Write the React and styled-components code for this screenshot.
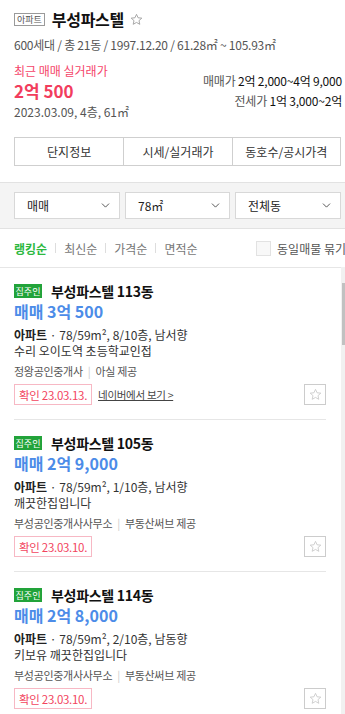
import styled, { createGlobalStyle } from 'styled-components';
import { ChevronDown } from 'lucide-react';

const GlobalStyle = createGlobalStyle`
  html, body {
    margin: 0;
    padding: 0;
    background: #fff;
  }
  body {
    font-family: 'Noto Sans CJK KR', 'Noto Sans', 'Liberation Sans', sans-serif;
    color: #222;
    -webkit-font-smoothing: antialiased;
  }
  * {
    box-sizing: border-box;
  }
`;

const Page = styled.div`
  width: 345px;
  height: 714px;
  display: flex;
  flex-direction: column;
  overflow: hidden;
  background: #fff;
`;

const Header = styled.header`
  padding: 11px 3px 0 14px;
`;

const TitleRow = styled.div`
  display: flex;
  align-items: center;
  height: 17px;
`;

const TypeTag = styled.span`
  display: inline-flex;
  align-items: center;
  justify-content: center;
  height: 13px;
  padding: 0 2px;
  border: 1px solid #9a9a9a;
  font-size: 9px;
  line-height: 1;
  color: #555;
  margin-right: 7px;
`;

const Title = styled.h1`
  margin: 0;
  font-size: 16px;
  line-height: 17px;
  font-weight: 700;
  letter-spacing: -0.3px;
  color: #111;
  margin-right: 6px;
`;

const Summary = styled.p`
  margin: 9px 0 0;
  font-size: 12px;
  line-height: 16px;
  color: #555;
  letter-spacing: -0.25px;
`;

const PriceRow = styled.div`
  display: flex;
  justify-content: space-between;
  margin-top: 10px;
`;

const RecentLabel = styled.div`
  font-size: 12px;
  line-height: 16px;
  color: #f5456a;
`;

const RecentPrice = styled.div`
  font-size: 17px;
  line-height: 24px;
  font-weight: 700;
  color: #f23d5d;
`;

const RecentMeta = styled.div`
  margin-top: 1px;
  font-size: 12px;
  line-height: 16px;
  color: #555;
`;

const RangeCol = styled.div`
  display: flex;
  flex-direction: column;
  align-items: flex-end;
  gap: 4px;
  padding-top: 10px;
`;

const RangeLine = styled.div`
  font-size: 12px;
  line-height: 16px;
  color: #555;
  letter-spacing: -0.2px;
  b {
    font-weight: 400;
    color: #111;
  }
`;

const Tabs = styled.nav`
  display: grid;
  grid-template-columns: repeat(3, 1fr);
  margin: 17px 4px 0 14px;
  border: 1px solid #cfcfcf;
  height: 29px;
`;

const Tab = styled.div`
  display: flex;
  align-items: center;
  justify-content: center;
  font-size: 12px;
  color: #333;
  border-left: ${p => (p.first ? 'none' : '1px solid #cfcfcf')};
`;

const FilterBar = styled.div`
  display: grid;
  grid-template-columns: 106px 105px 106px;
  gap: 5px;
  margin-top: 16px;
  padding: 9px 4px 9px 14px;
  background: #f4f4f4;
  border-top: 1px solid #e2e2e2;
  border-bottom: 1px solid #e2e2e2;
`;

const Select = styled.div`
  display: flex;
  align-items: center;
  justify-content: space-between;
  height: 27px;
  padding: 0 7px 0 12px;
  background: #fff;
  border: 1px solid #d8d8d8;
  font-size: 12px;
  color: #222;
`;

const SortBar = styled.div`
  display: flex;
  align-items: center;
  height: 38px;
  padding: 0 0 0 14px;
  white-space: nowrap;
`;

const SortItem = styled.span`
  font-size: 12px;
  color: ${p => (p.active ? '#2db83f' : '#777')};
  font-weight: ${p => (p.active ? 700 : 400)};
`;

const SortDivider = styled.span`
  width: 1px;
  height: 10px;
  background: #ddd;
  margin: 0 8px;
`;

const Bundle = styled.label`
  display: flex;
  align-items: center;
  margin-left: auto;
  margin-right: -1px;
  font-size: 12px;
  color: #555;
`;

const Check = styled.span`
  width: 15px;
  height: 15px;
  border: 1px solid #e2e2e2;
  background: #f8f8f8;
  margin-right: 6px;
`;

const ListArea = styled.div`
  flex: 1;
  display: flex;
  min-height: 0;
`;

const List = styled.ul`
  flex: 1;
  margin: 0;
  padding: 0 15px 0 14px;
  list-style: none;
  overflow: hidden;
  border-top: 1px solid #e6e6e6;
`;

const ScrollTrack = styled.div`
  width: 4px;
  padding-top: 16px;
  background: #f1f1f1;
`;

const ScrollThumb = styled.div`
  width: 3px;
  margin-left: 1px;
  height: 62px;
  background: #c1c1c1;
`;

const Item = styled.li`
  padding: 16px 0 14px;
  border-top: ${p => (p.first ? 'none' : '1px solid #e6e6e6')};
`;

const ItemHead = styled.div`
  display: flex;
  align-items: center;
  height: 14px;
`;

const OwnerTag = styled.span`
  display: inline-flex;
  align-items: center;
  justify-content: center;
  width: 28px;
  height: 14px;
  background: #22a33a;
  color: #fff;
  font-size: 9px;
  margin-right: 9px;
`;

const ItemTitle = styled.span`
  font-size: 14px;
  line-height: 14px;
  font-weight: 700;
  letter-spacing: -0.3px;
  color: #111;
`;

const ItemPrice = styled.div`
  margin-top: 3px;
  font-size: 16px;
  line-height: 20px;
  font-weight: 700;
  color: #4c8ce8;
`;

const Spec = styled.div`
  margin-top: 6px;
  font-size: 12px;
  line-height: 16px;
  color: #333;
  b {
    font-weight: 700;
    color: #222;
  }
`;

const Desc = styled.div`
  font-size: 12px;
  line-height: 16px;
  color: #333;
`;

const Agency = styled.div`
  margin-top: 5px;
  font-size: 11px;
  line-height: 14px;
  color: #555;
  letter-spacing: -0.3px;
  i {
    font-style: normal;
    color: #ccc;
    margin: 0 5px;
  }
`;

const Actions = styled.div`
  display: flex;
  align-items: center;
  height: 21px;
  margin-top: 6px;
`;

const Confirm = styled.span`
  display: inline-flex;
  align-items: center;
  height: 21px;
  padding: 0 4px;
  border: 1px solid #f7b8c4;
  color: #f2445e;
  font-size: 11.5px;
  letter-spacing: -0.3px;
`;

const NaverLink = styled.a`
  margin-left: 6px;
  font-size: 10.5px;
  color: #444;
  text-decoration: underline;
  letter-spacing: -0.3px;
`;

const SaveButton = styled.button`
  margin-left: auto;
  width: 22px;
  height: 21px;
  padding: 0;
  display: flex;
  align-items: center;
  justify-content: center;
  background: #fff;
  border: 1px solid #ccc;
`;

const Star = ({ size = 12, color = '#aaa' }) => (
  <svg width={size} height={size} viewBox="0 0 24 24" fill="none" stroke={color} strokeWidth="1.6" strokeLinejoin="round">
    <path d="M12 2.5l2.9 6.3 6.9.7-5.2 4.6 1.5 6.8L12 17.4l-6.1 3.5 1.5-6.8-5.2-4.6 6.9-.7z" />
  </svg>
);

const listings = [
  {
    dong: '113동',
    price: '매매 3억 500',
    spec: '78/59m², 8/10층, 남서향',
    desc: '수리 오이도역 초등학교인접',
    agency: '정왕공인중개사',
    source: '아실 제공',
    date: '23.03.13.',
    naver: true,
  },
  {
    dong: '105동',
    price: '매매 2억 9,000',
    spec: '78/59m², 1/10층, 남서향',
    desc: '깨끗한집입니다',
    agency: '부성공인중개사사무소',
    source: '부동산써브 제공',
    date: '23.03.10.',
  },
  {
    dong: '114동',
    price: '매매 2억 8,000',
    spec: '78/59m², 2/10층, 남동향',
    desc: '키보유 깨끗한집입니다',
    agency: '부성공인중개사사무소',
    source: '부동산써브 제공',
    date: '23.03.10.',
  },
];

const App = () => {
  const sorts = ['랭킹순', '최신순', '가격순', '면적순'];

  return (
    <Page>
      <GlobalStyle />
      <Header>
        <TitleRow>
          <TypeTag>아파트</TypeTag>
          <Title>부성파스텔</Title>
          <Star size={13} color="#9a9a9a" />
        </TitleRow>
        <Summary>600세대 / 총 21동 / 1997.12.20 / 61.28㎡ ~ 105.93㎡</Summary>
        <PriceRow>
          <div>
            <RecentLabel>최근 매매 실거래가</RecentLabel>
            <RecentPrice>2억 500</RecentPrice>
            <RecentMeta>2023.03.09, 4층, 61㎡</RecentMeta>
          </div>
          <RangeCol>
            <RangeLine>
              매매가 <b>2억 2,000~4억 9,000</b>
            </RangeLine>
            <RangeLine>
              전세가 <b>1억 3,000~2억</b>
            </RangeLine>
          </RangeCol>
        </PriceRow>
      </Header>

      <Tabs>
        <Tab first>단지정보</Tab>
        <Tab>시세/실거래가</Tab>
        <Tab>동호수/공시가격</Tab>
      </Tabs>

      <FilterBar>
        {['매매', '78㎡', '전체동'].map(label => (
          <Select key={label}>
            <span>{label}</span>
            <ChevronDown size={13} strokeWidth={1.5} color="#333" />
          </Select>
        ))}
      </FilterBar>

      <SortBar>
        {sorts.map((s, idx) => (
          <span key={s} style={{ display: 'contents' }}>
            {idx > 0 && <SortDivider />}
            <SortItem active={idx === 0}>{s}</SortItem>
          </span>
        ))}
        <Bundle>
          <Check />
          동일매물 묶기
        </Bundle>
      </SortBar>

      <ListArea>
        <List>
          {listings.map((item, idx) => (
            <Item key={idx} first={idx === 0}>
              <ItemHead>
                <OwnerTag>집주인</OwnerTag>
                <ItemTitle>부성파스텔 {item.dong}</ItemTitle>
              </ItemHead>
              <ItemPrice>{item.price}</ItemPrice>
              <Spec>
                <b>아파트</b> · {item.spec}
              </Spec>
              <Desc>{item.desc}</Desc>
              <Agency>
                {item.agency}
                <i>|</i>
                {item.source}
              </Agency>
              <Actions>
                <Confirm>확인 {item.date}</Confirm>
                {item.naver && <NaverLink>네이버에서 보기 &gt;</NaverLink>}
                <SaveButton>
                  <Star size={13} color="#c8c8c8" />
                </SaveButton>
              </Actions>
            </Item>
          ))}
        </List>
        <ScrollTrack>
          <ScrollThumb />
        </ScrollTrack>
      </ListArea>
    </Page>
  );
};

export default App;
